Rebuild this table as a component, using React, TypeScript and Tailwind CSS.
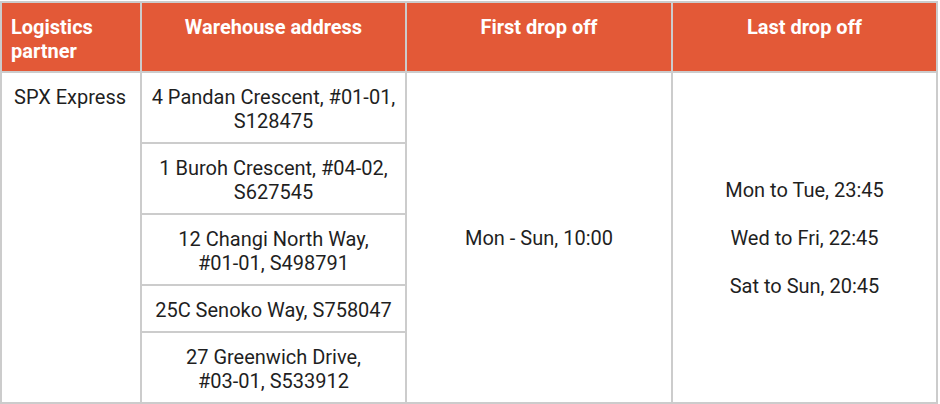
const addresses = [
  ["4 Pandan Crescent, #01-01,", "S128475"],
  ["1 Buroh Crescent, #04-02,", "S627545"],
  ["12 Changi North Way,", "#01-01, S498791"],
  ["25C Senoko Way, S758047"],
  ["27 Greenwich Drive,", "#03-01, S533912"],
];

const lastDropOff = ["Mon to Tue, 23:45", "Wed to Fri, 22:45", "Sat to Sun, 20:45"];

export default function App() {
  return (
    <div className="min-h-screen bg-white pt-px font-['Roboto',sans-serif] text-[20px] leading-6 text-[#1f1f1f]">
      <table className="w-[938px] table-fixed border-collapse">
        <colgroup>
          <col className="w-[140px]" />
          <col className="w-[265px]" />
          <col className="w-[266px]" />
          <col className="w-[265px]" />
        </colgroup>
        <thead>
          <tr className="bg-[#e35937] text-white">
            <th className="border-2 border-[#cccccc] pt-3 pb-2 pl-[9px] pr-2 text-left align-top font-bold">
              Logistics partner
            </th>
            <th className="border-2 border-[#cccccc] px-2 pt-3 pb-2 text-center align-top font-bold">
              Warehouse address
            </th>
            <th className="border-2 border-[#cccccc] px-2 pt-3 pb-2 text-center align-top font-bold">
              First drop off
            </th>
            <th className="border-2 border-[#cccccc] px-2 pt-3 pb-2 text-center align-top font-bold">
              Last drop off
            </th>
          </tr>
        </thead>
        <tbody>
          {addresses.map((lines, i) => (
            <tr key={i}>
              {i === 0 && (
                <td rowSpan={addresses.length} className="border-2 border-[#cccccc] pt-[11.5px] pb-[9.5px] pl-3 pr-2 text-left align-top">
                  SPX Express
                </td>
              )}
              <td className="border-2 border-[#cccccc] px-1 pt-[11.5px] pb-[9.5px] text-center align-middle">
                {lines.map((l) => (
                  <div key={l}>{l}</div>
                ))}
              </td>
              {i === 0 && (
                <td rowSpan={addresses.length} className="border-2 border-[#cccccc] px-2 text-center align-middle">
                  Mon - Sun, 10:00
                </td>
              )}
              {i === 0 && (
                <td rowSpan={addresses.length} className="border-2 border-[#cccccc] px-2 text-center align-middle">
                  <div className="flex flex-col gap-6">
                    {lastDropOff.map((t) => (
                      <p key={t}>{t}</p>
                    ))}
                  </div>
                </td>
              )}
            </tr>
          ))}
        </tbody>
      </table>
    </div>
  );
}
